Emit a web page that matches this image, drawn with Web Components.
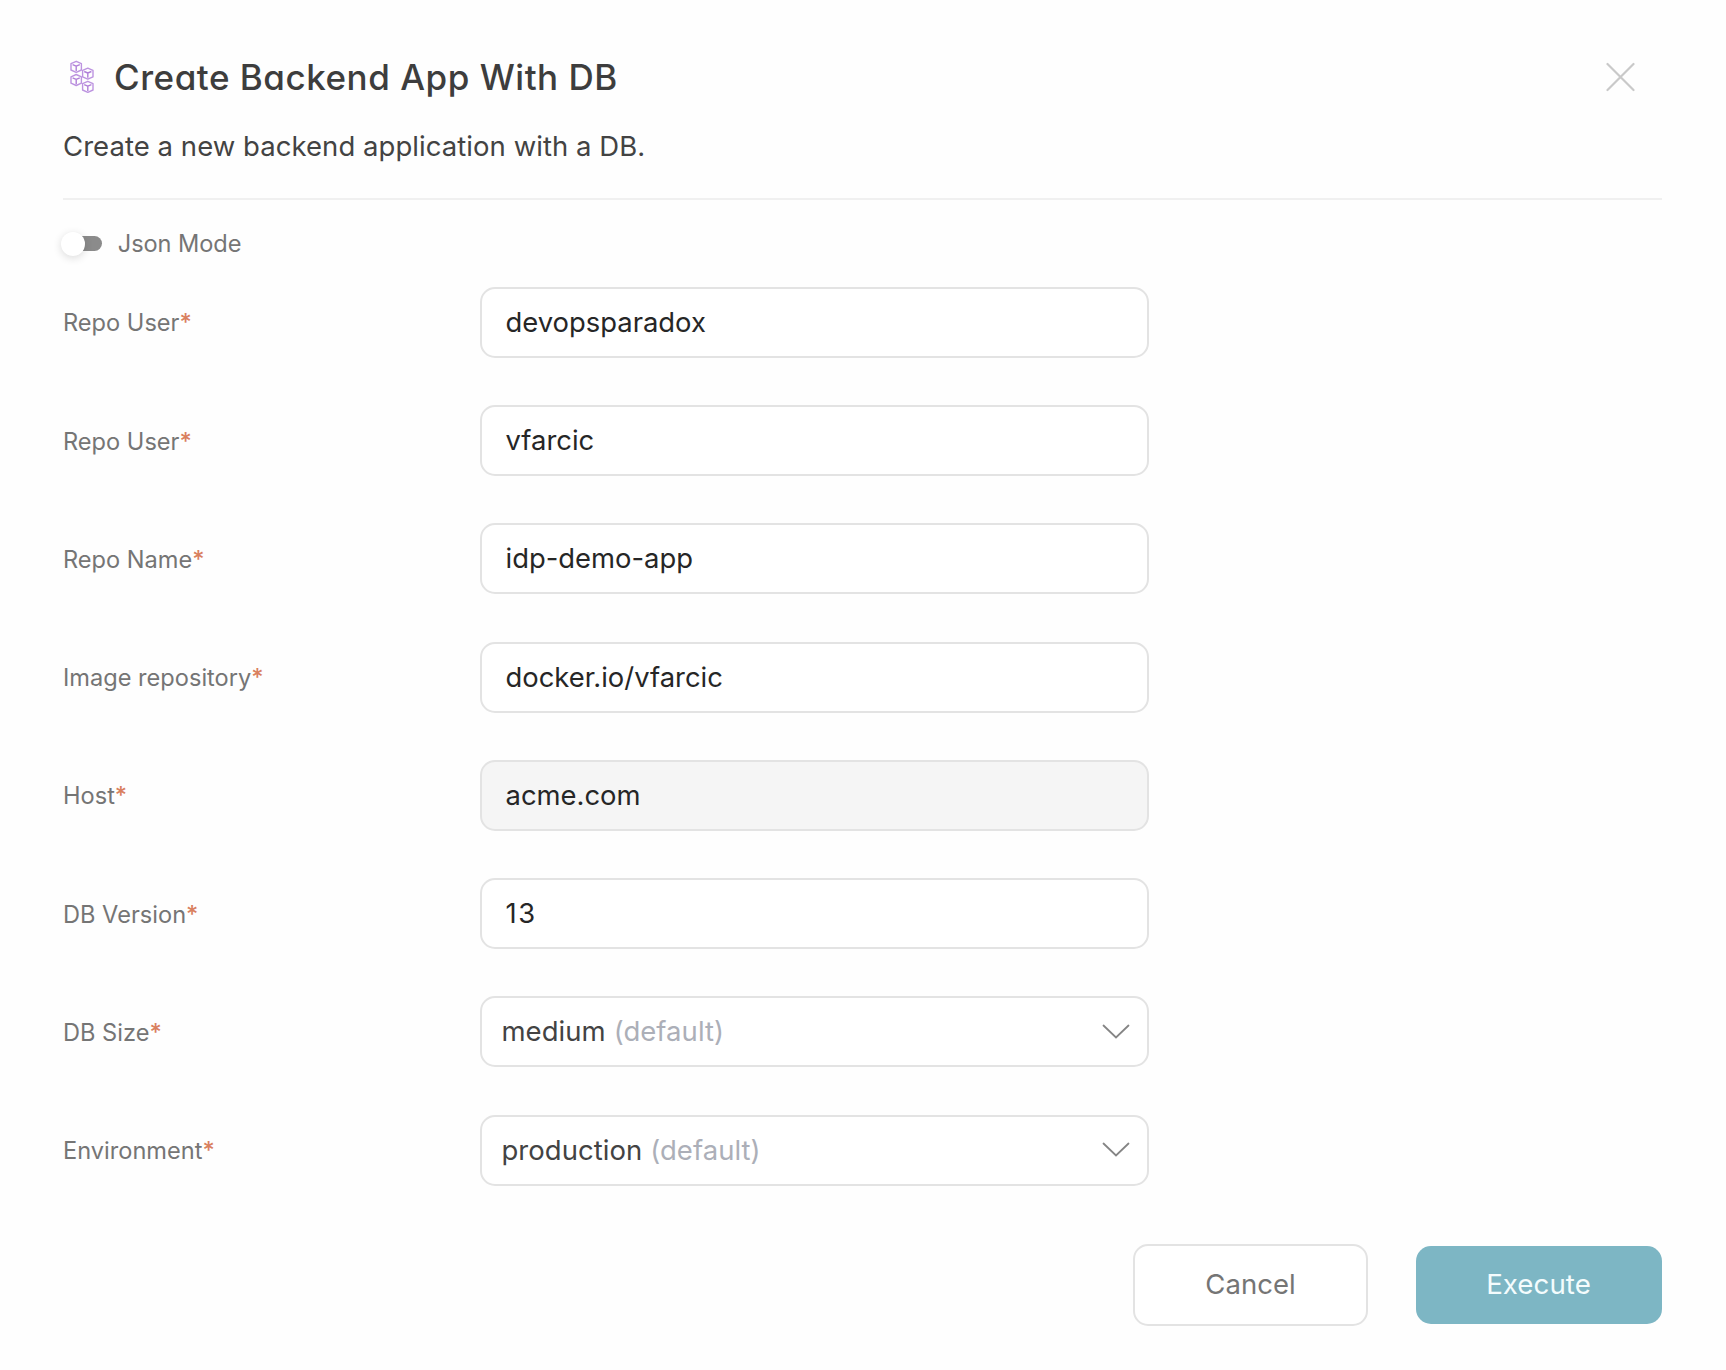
<!DOCTYPE html>
<html lang="en">
<head>
<meta charset="utf-8">
<title>Create Backend App With DB</title>
<style>
html, body { margin: 0; background: #fefefe; }
body { font-family: Inter, "Liberation Sans", sans-serif; width: 1726px; height: 1370px; overflow: hidden; }
</style>
</head>
<body>
<action-dialog>
  <dialog-header slot="header" heading="Create Backend App With DB">Create a new backend application with a DB.</dialog-header>
  <toggle-switch>Json Mode</toggle-switch>
  <form-row label="Repo User"><text-field>devopsparadox</text-field></form-row>
  <form-row label="Repo User"><text-field>vfarcic</text-field></form-row>
  <form-row label="Repo Name"><text-field>idp-demo-app</text-field></form-row>
  <form-row label="Image repository"><text-field>docker.io/vfarcic</text-field></form-row>
  <form-row label="Host"><text-field disabled>acme.com</text-field></form-row>
  <form-row label="DB Version"><text-field numeric>13</text-field></form-row>
  <form-row label="DB Size"><select-field note="(default)">medium</select-field></form-row>
  <form-row label="Environment"><select-field note="(default)">production</select-field></form-row>
  <action-button slot="footer">Cancel</action-button>
  <action-button slot="footer" primary>Execute</action-button>
</action-dialog>
<script>
const define = (name, markup, setup) => customElements.define(name, class extends HTMLElement {
  connectedCallback() {
    if (this.shadowRoot) return;
    const root = this.attachShadow({ mode: 'open' });
    root.innerHTML = markup;
    if (setup) setup(this, root);
  }
});

define('action-dialog', `
<style>
:host { display: flex; flex-direction: column; box-sizing: border-box; height: 1370px; padding: 47px 64.5px 0 63px; }
main { display: flex; flex-direction: column; align-items: flex-start; }
footer { display: flex; justify-content: flex-end; align-items: center; gap: 48px; margin-top: 58px; }
</style>
<slot name="header"></slot>
<main><slot></slot></main>
<footer><slot name="footer"></slot></footer>`);

define('cube-icon', `
<style>:host { display: block; width: 26px; height: 34px; } svg { display: block; }</style>
<svg width="26" height="34" viewBox="0 0 26 34" fill="none" stroke="#bd94e0" stroke-width="1.4" stroke-linejoin="round">
  <defs><g id="cube"><path d="M0-5.5 5.2-3.2V3.2L0 5.5-5.2 3.2V-3.2Z"/><path d="M-3.6-2.1 0-.6 3.6-2.1M0-.6V4.2" stroke="#b07fd8"/></g></defs>
  <use href="#cube" x="7.2" y="6.8"/><use href="#cube" x="18.8" y="13.6"/>
  <use href="#cube" x="7.2" y="20"/><use href="#cube" x="18.8" y="26.8"/>
</svg>`);

define('dialog-header', `
<style>
:host { display: block; border-bottom: 2px solid #f0f0f0; height: 151px; }
.bar { display: flex; align-items: center; height: 60px; }
cube-icon { margin-left: 6px; }
h1 { margin: 0 0 0 19px; flex: 1; font-size: 35px; font-weight: 500; line-height: 60px; color: #3d3d3d; letter-spacing: .52px; font-feature-settings: "cv11"; }
.close { display: block; margin-right: 27px; }
p { margin: 19px 0 0; font-size: 27.5px; line-height: 40px; color: #434343; letter-spacing: .05px; }
</style>
<div class="bar"><cube-icon></cube-icon><h1></h1>
<svg class="close" width="29" height="30" viewBox="0 0 29 30" stroke="#c9c9c9" stroke-width="2.2" stroke-linecap="round"><path d="M1.5 2 27.5 28M27.5 2 1.5 28"/></svg></div>
<p><slot></slot></p>`, (el, root) => { root.querySelector('h1').textContent = el.getAttribute('heading'); });

define('toggle-switch', `
<style>
:host { display: flex; align-items: center; height: 40px; margin: 23.5px 0 23.4px; font-size: 23.6px; color: #757575; }
.track { display: flex; align-items: center; width: 35px; height: 15.5px; margin-left: 4px; border-radius: 8px; background: #8b8b8b; }
.knob { flex: none; width: 24px; height: 24px; margin-left: -6.5px; border-radius: 50%; background: #fff; box-shadow: 0 2px 8px rgba(0,0,0,.14); }
.text { margin-left: 15.8px; letter-spacing: -.08px; }
</style>
<span class="track"><span class="knob"></span></span><span class="text"><slot></slot></span>`);

define('form-row', `
<style>
:host { display: flex; align-items: center; height: 71px; margin-bottom: 47.25px; }
:host(:last-of-type) { margin-bottom: 0; }
label { width: 417px; padding-top: 2px; font-size: 23.6px; line-height: 30px; color: #757575; }
b { font-weight: 500; color: #d9805f; }
</style>
<label><span></span><b>*</b></label><slot></slot>`, (el, root) => { root.querySelector('span').textContent = el.getAttribute('label'); });

define('text-field', `
<style>
:host { display: flex; align-items: center; box-sizing: border-box; width: 669px; height: 71px; padding: 0 23.5px 1px; border: 2px solid #e3e3e3; border-radius: 15px; background: #fff; font-size: 27.4px; color: #262626; }
:host([disabled]) { background: #f5f5f5; }
:host([numeric]) { letter-spacing: 1.6px; }
</style><slot></slot>`);

define('select-field', `
<style>
:host { display: flex; align-items: center; box-sizing: border-box; width: 669px; height: 71px; padding: 0 16px 1px 19.5px; border: 2px solid #e3e3e3; border-radius: 15px; background: #fff; font-size: 27.5px; letter-spacing: .03px; color: #434343; }
.note { flex: 1; margin-left: 8px; color: #acafb8; }
</style><span><slot></slot></span><span class="note"></span>
<svg width="30" height="17" viewBox="0 0 30 17" fill="none" stroke="#858585" stroke-width="1.8" stroke-linecap="round"><path d="M2.5 2.5 15 14.5 27.5 2.5"/></svg>`,
(el, root) => { root.querySelector('.note').textContent = el.getAttribute('note'); });

define('action-button', `
<style>
:host { display: flex; align-items: center; justify-content: center; box-sizing: border-box; width: 235px; height: 82px; padding: 0 0 1px 1px; border: 2px solid #e3e3e3; border-radius: 15px; background: #fff; font-size: 27.5px; letter-spacing: .05px; color: #757575; }
:host([primary]) { width: 246px; height: 78px; padding: 0 0 1px; border: 0; background: #7db6c4; color: #f4fcfd; font-size: 27.7px; }
</style><slot></slot>`);
</script>
</body>
</html>
